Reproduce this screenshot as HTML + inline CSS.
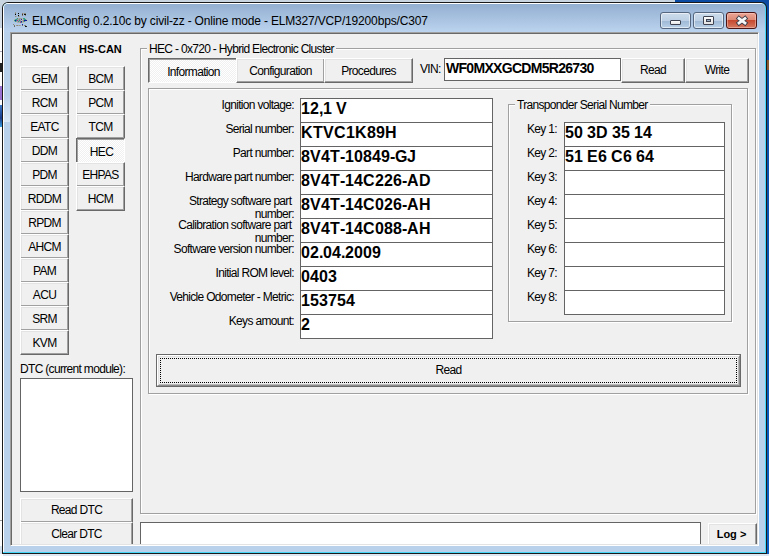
<!DOCTYPE html>
<html><head><meta charset="utf-8">
<style>
*{margin:0;padding:0;box-sizing:border-box}
html,body{width:769px;height:556px;overflow:hidden;background:#dde7f2;position:relative;font-family:"Liberation Sans",sans-serif;font-size:11px;color:#000}
.a{position:absolute}
.t{position:absolute;white-space:pre;line-height:14px;font-size:12px;letter-spacing:-0.68px;margin-top:1px}
.b{font-weight:bold}
/* classic raised button, 25px tall overlapping */
.btn{position:absolute;background:#f0f0f0;border-top:1px solid #fff;border-left:1px solid #fff;border-right:1px solid #696969;border-bottom:1px solid #696969;box-shadow:inset -1px -1px 0 #a0a0a0,inset 1px 1px 0 #e3e3e3;text-align:center;white-space:pre;letter-spacing:-0.25px}
.dn{position:absolute;border-top:1px solid #696969;border-left:1px solid #696969;border-right:1px solid #fff;border-bottom:1px solid #fff;box-shadow:inset 1px 1px 0 #a0a0a0;background-color:#fff;background-image:linear-gradient(45deg,#f0f0f0 25%,transparent 25%,transparent 75%,#f0f0f0 75%),linear-gradient(45deg,#f0f0f0 25%,transparent 25%,transparent 75%,#f0f0f0 75%);background-size:2px 2px;background-position:0 0,1px 1px;text-align:center;white-space:pre;letter-spacing:-0.25px}
.ed{position:absolute;background:#fff;border:1px solid #646464}
.v{position:absolute;font-size:16px;font-weight:bold;white-space:pre;line-height:18px}
.etch{position:absolute;border:1px solid #a0a0a0;box-shadow:1px 1px 0 #fff, inset 1px 1px 0 #fff}
</style></head><body>
<!-- desktop bits -->
<div class="a" style="left:0;top:0;width:769px;height:3px;background:#c9d6e2"></div>
<div class="a" style="left:675px;top:0;width:94px;height:554px;background:linear-gradient(#0a4aa2,#0a5cc4)"></div>
<div class="a" style="left:767px;top:60px;width:2px;height:10px;background:#8a5a30"></div>
<div class="a" style="left:0;top:0;width:3px;height:556px;background:#fdfdfd"></div>
<div class="a" style="left:0;top:0;width:3px;height:28px;background:#c9d6e2"></div>
<div class="a" style="left:0;top:86px;width:3px;height:14px;background:#9a70d0"></div>
<div class="a" style="left:0;top:105px;width:3px;height:22px;background:linear-gradient(#3a78c8,#1a3c8c 60%,#3aa0e0)"></div>
<div class="a" style="left:0;top:520px;width:3px;height:1px;background:#9a9a9a"></div>
<div class="a" style="left:0;top:63px;width:2px;height:9px;background:#222"></div>
<div class="a" style="left:0;top:51px;width:2px;height:1px;background:#aab"></div>
<div class="a" style="left:0;top:546px;width:3px;height:8px;background:#d4e2f0"></div>

<!-- window frame -->
<div class="a" style="left:2px;top:2px;width:765px;height:552px;background:#1a1a1a;border-radius:6px 6px 0 0"></div>
<div class="a" style="left:3px;top:3px;width:763px;height:550px;background:#44d7f8;border-radius:5px 5px 0 0"></div>
<div class="a" style="left:3px;top:3px;width:762px;height:549px;background:#fff;border-radius:5px 5px 0 0"></div>
<div class="a" style="left:4px;top:4px;width:761px;height:548px;background:#b9d1ea;border-radius:4px 4px 0 0"></div>
<div class="a" style="left:4px;top:4px;width:761px;height:28px;background:linear-gradient(#93afd1,#bbd3ee);border-radius:4px 4px 0 0"></div>

<div class="a" style="left:4px;top:95px;width:6px;height:27px;background:linear-gradient(#b9d1ea,#dae8f6)"></div>
<!-- title -->
<div class="a" style="left:12px;top:12px;width:16px;height:16px">
<svg width="16" height="16" viewBox="0 0 16 16" shape-rendering="crispEdges"><rect x="3" y="0" width="1" height="1" fill="#9a9a8a"/><rect x="3" y="1" width="1" height="1" fill="#7a7a6a"/><rect x="3" y="2" width="1" height="1" fill="#000"/><rect x="3" y="4" width="1" height="1" fill="#8a8a7a"/><rect x="4" y="4" width="1" height="1" fill="#aaa"/><rect x="6" y="1" width="1" height="1" fill="#000"/><rect x="6" y="3" width="1" height="1" fill="#000"/><rect x="6" y="4" width="1" height="1" fill="#8a8a7a"/><rect x="7" y="4" width="1" height="1" fill="#aaa"/><rect x="10" y="1" width="1" height="1" fill="#8a7a6a"/><rect x="10" y="2" width="1" height="1" fill="#333"/><rect x="10" y="3" width="1" height="1" fill="#8a7a6a"/><rect x="11" y="1" width="1" height="1" fill="#aaa"/><rect x="12" y="1" width="1" height="1" fill="#8a8a7a"/><rect x="12" y="2" width="1" height="1" fill="#111"/><rect x="13" y="1" width="1" height="1" fill="#8a8a7a"/><rect x="13" y="2" width="1" height="1" fill="#111"/><rect x="13" y="3" width="1" height="1" fill="#8a8a7a"/><rect x="4" y="6" width="1" height="1" fill="#a9b0a6"/><rect x="5" y="6" width="1" height="1" fill="#2a9a90"/><rect x="6" y="6" width="1" height="1" fill="#b0b0a0"/><rect x="7" y="6" width="1" height="1" fill="#9a9a9a"/><rect x="8" y="6" width="1" height="1" fill="#9a9a9a"/><rect x="9" y="6" width="1" height="1" fill="#a0a090"/><rect x="10" y="6" width="1" height="1" fill="#b8b8a8"/><rect x="11" y="6" width="1" height="1" fill="#2aa090"/><rect x="12" y="6" width="1" height="1" fill="#2aa090"/><rect x="13" y="6" width="1" height="1" fill="#c0c0b0"/><rect x="2" y="7" width="1" height="1" fill="#b0b8b0"/><rect x="3" y="7" width="1" height="1" fill="#40a8a0"/><rect x="4" y="7" width="1" height="1" fill="#2a9a90"/><rect x="5" y="7" width="1" height="1" fill="#909a90"/><rect x="6" y="7" width="1" height="1" fill="#a0a0a0"/><rect x="7" y="7" width="1" height="1" fill="#888"/><rect x="8" y="7" width="1" height="1" fill="#b0b0b0"/><rect x="9" y="7" width="1" height="1" fill="#1a2a9a"/><rect x="10" y="7" width="1" height="1" fill="#c0c0c0"/><rect x="11" y="7" width="1" height="1" fill="#9a9a9a"/><rect x="12" y="7" width="1" height="1" fill="#2aa090"/><rect x="13" y="7" width="1" height="1" fill="#2a9a90"/><rect x="14" y="7" width="1" height="1" fill="#b0b8b0"/><rect x="1" y="8" width="1" height="1" fill="#c0c8c0"/><rect x="2" y="8" width="1" height="1" fill="#2a9a90"/><rect x="3" y="8" width="1" height="1" fill="#10209a"/><rect x="4" y="8" width="1" height="1" fill="#2aa090"/><rect x="5" y="8" width="1" height="1" fill="#c02090"/><rect x="6" y="8" width="1" height="1" fill="#a0a0a0"/><rect x="7" y="8" width="1" height="1" fill="#2a9a90"/><rect x="8" y="8" width="1" height="1" fill="#9a9a9a"/><rect x="9" y="8" width="1" height="1" fill="#c0c0c0"/><rect x="10" y="8" width="1" height="1" fill="#aaa"/><rect x="11" y="8" width="1" height="1" fill="#888"/><rect x="12" y="8" width="1" height="1" fill="#10209a"/><rect x="13" y="8" width="1" height="1" fill="#10209a"/><rect x="14" y="8" width="1" height="1" fill="#10209a"/><rect x="15" y="8" width="1" height="1" fill="#c0c0b0"/><rect x="2" y="9" width="1" height="1" fill="#b0b8b0"/><rect x="3" y="9" width="1" height="1" fill="#2a9a90"/><rect x="4" y="9" width="1" height="1" fill="#909a90"/><rect x="5" y="9" width="1" height="1" fill="#aaa"/><rect x="6" y="9" width="1" height="1" fill="#2a9a90"/><rect x="7" y="9" width="1" height="1" fill="#9a9a9a"/><rect x="8" y="9" width="1" height="1" fill="#888"/><rect x="9" y="9" width="1" height="1" fill="#10209a"/><rect x="10" y="9" width="1" height="1" fill="#aaa"/><rect x="11" y="9" width="1" height="1" fill="#888"/><rect x="12" y="9" width="1" height="1" fill="#2a9a90"/><rect x="13" y="9" width="1" height="1" fill="#b0b0b0"/><rect x="5" y="10" width="1" height="1" fill="#b0b0b0"/><rect x="6" y="10" width="1" height="1" fill="#aaa"/><rect x="7" y="10" width="1" height="1" fill="#b0b0b0"/><rect x="8" y="10" width="1" height="1" fill="#c02090"/><rect x="9" y="10" width="1" height="1" fill="#2a9a90"/><rect x="10" y="10" width="1" height="1" fill="#aaa"/><rect x="11" y="10" width="1" height="1" fill="#b8b8b0"/><rect x="1" y="12" width="1" height="1" fill="#8a8a7a"/><rect x="2" y="13" width="1" height="1" fill="#7a7a6a"/><rect x="2" y="14" width="1" height="1" fill="#666"/><rect x="4" y="13" width="1" height="1" fill="#9a9a8a"/><rect x="5" y="13" width="1" height="1" fill="#8a8a7a"/><rect x="6" y="13" width="1" height="1" fill="#aaa"/><rect x="7" y="13" width="1" height="1" fill="#9a9a8a"/><rect x="8" y="13" width="1" height="1" fill="#aaa"/><rect x="10" y="12" width="1" height="1" fill="#10209a"/><rect x="10" y="13" width="1" height="1" fill="#7a7a6a"/><rect x="12" y="13" width="1" height="1" fill="#8a8a7a"/><rect x="13" y="13" width="1" height="1" fill="#7a7a6a"/><rect x="13" y="14" width="1" height="1" fill="#111"/><rect x="14" y="14" width="1" height="1" fill="#222"/></svg></div>
<div class="t" style="left:32px;top:13px;font-size:12px;line-height:15px;letter-spacing:-0.17px;color:#000">ELMConfig 0.2.10c by civil-zz - Online mode - ELM327/VCP/19200bps/C307</div>

<!-- caption buttons -->
<div class="a" style="left:660px;top:12px;width:31px;height:17px;border:1px solid #55667e;border-radius:3px;box-shadow:inset 0 0 0 1px rgba(255,255,255,0.55);background:linear-gradient(#cddcec 0%,#bccfe4 52%,#9fb9d5 53%,#b9d0e8 100%)"></div>
<div class="a" style="left:670px;top:20px;width:11px;height:5px;background:linear-gradient(#fdfdfd,#e6e6e6);border:1px solid #3e4250;border-radius:1px"></div>
<div class="a" style="left:693px;top:12px;width:31px;height:17px;border:1px solid #55667e;border-radius:3px;box-shadow:inset 0 0 0 1px rgba(255,255,255,0.55);background:linear-gradient(#cddcec 0%,#bccfe4 52%,#9fb9d5 53%,#b9d0e8 100%)"></div>
<div class="a" style="left:703px;top:16px;width:11px;height:9px;background:linear-gradient(#fdfdfd,#e2e2e2);border:1px solid #3e4250;border-radius:1px"></div>
<div class="a" style="left:706px;top:19px;width:5px;height:3px;background:#9ab0c8;border:1px solid #3e4250"></div>
<div class="a" style="left:726px;top:12px;width:31px;height:17px;border:1px solid #4a1414;border-radius:3px;box-shadow:inset 0 0 0 1px rgba(255,220,210,0.45);background:linear-gradient(#eda595 0%,#dd8a76 45%,#c5462c 46%,#d57a62 100%)"></div>
<svg class="a" style="left:734px;top:13px" width="16" height="14" viewBox="0 0 16 14"><path d="M3.2 4 L12.8 11.5 M12.8 4 L3.2 11.5" stroke="#3c3c48" stroke-width="4.6" stroke-linecap="butt"/><path d="M3.9 4.6 L12.1 10.9 M12.1 4.6 L3.9 10.9" stroke="#f6f6f6" stroke-width="2.8" stroke-linecap="butt"/></svg>

<!-- client area -->
<div class="a" style="left:10px;top:32px;width:749px;height:514px;background:#f0f0f0;border-left:1px solid #a0a0a0;border-top:1px solid #a0a0a0;border-right:1px solid #fff;border-bottom:1px solid #fff;box-shadow:inset 1px 1px 0 #696969,inset -1px -1px 0 #e3e3e3"></div>

<div class="t b" style="left:22px;top:41px;font-size:11px;letter-spacing:0">MS-CAN</div>
<div class="t b" style="left:79px;top:41px;font-size:11px;letter-spacing:0">HS-CAN</div>

<div class="a" style="left:12px;top:34px;width:745px;height:510px;overflow:hidden"><div class="a" style="left:-12px;top:-34px;width:769px;height:556px">
<div class="btn" style="left:20px;top:66px;width:49px;height:25px;"></div>
<div class="t" style="left:20px;top:66px;width:49px;height:25px;line-height:25px;text-align:center;">GEM</div>
<div class="btn" style="left:20px;top:90px;width:49px;height:25px;"></div>
<div class="t" style="left:20px;top:90px;width:49px;height:25px;line-height:25px;text-align:center;">RCM</div>
<div class="btn" style="left:20px;top:114px;width:49px;height:25px;"></div>
<div class="t" style="left:20px;top:114px;width:49px;height:25px;line-height:25px;text-align:center;">EATC</div>
<div class="btn" style="left:20px;top:138px;width:49px;height:25px;"></div>
<div class="t" style="left:20px;top:138px;width:49px;height:25px;line-height:25px;text-align:center;">DDM</div>
<div class="btn" style="left:20px;top:162px;width:49px;height:25px;"></div>
<div class="t" style="left:20px;top:162px;width:49px;height:25px;line-height:25px;text-align:center;">PDM</div>
<div class="btn" style="left:20px;top:186px;width:49px;height:25px;"></div>
<div class="t" style="left:20px;top:186px;width:49px;height:25px;line-height:25px;text-align:center;">RDDM</div>
<div class="btn" style="left:20px;top:210px;width:49px;height:25px;"></div>
<div class="t" style="left:20px;top:210px;width:49px;height:25px;line-height:25px;text-align:center;">RPDM</div>
<div class="btn" style="left:20px;top:234px;width:49px;height:25px;"></div>
<div class="t" style="left:20px;top:234px;width:49px;height:25px;line-height:25px;text-align:center;">AHCM</div>
<div class="btn" style="left:20px;top:258px;width:49px;height:25px;"></div>
<div class="t" style="left:20px;top:258px;width:49px;height:25px;line-height:25px;text-align:center;">PAM</div>
<div class="btn" style="left:20px;top:282px;width:49px;height:25px;"></div>
<div class="t" style="left:20px;top:282px;width:49px;height:25px;line-height:25px;text-align:center;">ACU</div>
<div class="btn" style="left:20px;top:306px;width:49px;height:25px;"></div>
<div class="t" style="left:20px;top:306px;width:49px;height:25px;line-height:25px;text-align:center;">SRM</div>
<div class="btn" style="left:20px;top:330px;width:49px;height:25px;"></div>
<div class="t" style="left:20px;top:330px;width:49px;height:25px;line-height:25px;text-align:center;">KVM</div>
<div class="btn" style="left:76px;top:66px;width:49px;height:25px;"></div>
<div class="t" style="left:76px;top:66px;width:49px;height:25px;line-height:25px;text-align:center;">BCM</div>
<div class="btn" style="left:76px;top:90px;width:49px;height:25px;"></div>
<div class="t" style="left:76px;top:90px;width:49px;height:25px;line-height:25px;text-align:center;">PCM</div>
<div class="btn" style="left:76px;top:114px;width:49px;height:25px;"></div>
<div class="t" style="left:76px;top:114px;width:49px;height:25px;line-height:25px;text-align:center;">TCM</div>
<div class="dn" style="left:76px;top:138px;width:49px;height:25px;"></div>
<div class="t" style="left:77px;top:139px;width:49px;height:25px;line-height:25px;text-align:center;">HEC</div>
<div class="btn" style="left:76px;top:162px;width:49px;height:25px;"></div>
<div class="t" style="left:76px;top:162px;width:49px;height:25px;line-height:25px;text-align:center;">EHPAS</div>
<div class="btn" style="left:76px;top:186px;width:49px;height:25px;"></div>
<div class="t" style="left:76px;top:186px;width:49px;height:25px;line-height:25px;text-align:center;">HCM</div>
<div class="t" style="left:20px;top:361px">DTC (current module):</div>
<div class="ed" style="left:20px;top:378px;width:113px;height:114px"></div>
<div class="btn" style="left:20px;top:498px;width:113px;height:25px;"></div>
<div class="t" style="left:20px;top:498px;width:113px;height:25px;line-height:25px;text-align:center;margin-top:0;">Read DTC</div>
<div class="btn" style="left:20px;top:522px;width:113px;height:25px;"></div>
<div class="t" style="left:20px;top:522px;width:113px;height:25px;line-height:25px;text-align:center;margin-top:0;">Clear DTC</div>
<div class="etch" style="left:140px;top:48px;width:616px;height:466px"></div>
<div class="t" style="left:147px;top:41px;padding:0 2px 0 2px;background:#f0f0f0">HEC - 0x720 - Hybrid Electronic Cluster</div>
<div class="dn" style="left:148px;top:58px;width:89px;height:25px;"></div>
<div class="t" style="left:149px;top:59px;width:89px;height:25px;line-height:25px;text-align:center;">Information</div>
<div class="btn" style="left:236px;top:58px;width:89px;height:25px;"></div>
<div class="t" style="left:236px;top:58px;width:89px;height:25px;line-height:25px;text-align:center;">Configuration</div>
<div class="btn" style="left:324px;top:58px;width:89px;height:25px;"></div>
<div class="t" style="left:324px;top:58px;width:89px;height:25px;line-height:25px;text-align:center;">Procedures</div>
<div class="t" style="left:420px;top:61px">VIN:</div>
<div class="ed" style="left:444px;top:58px;width:177px;height:23px"></div>
<div class="v" style="left:446px;top:60px;font-size:14px;line-height:16px;letter-spacing:-0.7px">WF0MXXGCDM5R26730</div>
<div class="btn" style="left:621px;top:58px;width:64px;height:25px;"></div>
<div class="t" style="left:621px;top:58px;width:64px;height:25px;line-height:25px;text-align:center;margin-top:0;">Read</div>
<div class="btn" style="left:685px;top:58px;width:64px;height:25px;"></div>
<div class="t" style="left:685px;top:58px;width:64px;height:25px;line-height:25px;text-align:center;margin-top:0;">Write</div>
<div class="etch" style="left:148px;top:88px;width:600px;height:306px"></div>
<div class="t" style="left:150px;width:144px;text-align:right;top:97px">Ignition voltage:</div>
<div class="t" style="left:150px;width:144px;text-align:right;top:121px">Serial number:</div>
<div class="t" style="left:150px;width:144px;text-align:right;top:145px">Part number:</div>
<div class="t" style="left:150px;width:144px;text-align:right;top:169px">Hardware part number:</div>
<div class="t" style="left:150px;width:144px;text-align:right;top:194px;line-height:13px">Strategy software part <br>number:</div>
<div class="t" style="left:150px;width:144px;text-align:right;top:218px;line-height:13px">Calibration software part <br>number:</div>
<div class="t" style="left:150px;width:144px;text-align:right;top:241px">Software version number:</div>
<div class="t" style="left:150px;width:144px;text-align:right;top:265px">Initial ROM level:</div>
<div class="t" style="left:150px;width:144px;text-align:right;top:289px">Vehicle Odometer - Metric:</div>
<div class="t" style="left:150px;width:144px;text-align:right;top:313px">Keys amount:</div>
<div class="ed" style="left:300px;top:98px;width:193px;height:25px"></div>
<div class="ed" style="left:300px;top:122px;width:193px;height:25px"></div>
<div class="ed" style="left:300px;top:146px;width:193px;height:25px"></div>
<div class="ed" style="left:300px;top:170px;width:193px;height:25px"></div>
<div class="ed" style="left:300px;top:194px;width:193px;height:25px"></div>
<div class="ed" style="left:300px;top:218px;width:193px;height:25px"></div>
<div class="ed" style="left:300px;top:242px;width:193px;height:25px"></div>
<div class="ed" style="left:300px;top:266px;width:193px;height:25px"></div>
<div class="ed" style="left:300px;top:290px;width:193px;height:25px"></div>
<div class="ed" style="left:300px;top:314px;width:193px;height:25px"></div>
<div class="v" style="left:301px;top:100px"><span style="display:inline-block;width:9px">1</span><span style="display:inline-block;width:9px">2</span><span style="display:inline-block;width:4px">,</span><span style="display:inline-block;width:9px">1</span><span style="display:inline-block;width:4px">&nbsp;</span><span style="display:inline-block;width:11px">V</span></div>
<div class="v" style="left:301px;top:124px"><span style="display:inline-block;width:12px">K</span><span style="display:inline-block;width:10px">T</span><span style="display:inline-block;width:11px">V</span><span style="display:inline-block;width:12px">C</span><span style="display:inline-block;width:9px">1</span><span style="display:inline-block;width:12px">K</span><span style="display:inline-block;width:9px">8</span><span style="display:inline-block;width:9px">9</span><span style="display:inline-block;width:12px">H</span></div>
<div class="v" style="left:301px;top:148px"><span style="display:inline-block;width:9px">8</span><span style="display:inline-block;width:11px">V</span><span style="display:inline-block;width:9px">4</span><span style="display:inline-block;width:10px">T</span><span style="display:inline-block;width:5px">-</span><span style="display:inline-block;width:9px">1</span><span style="display:inline-block;width:9px">0</span><span style="display:inline-block;width:9px">8</span><span style="display:inline-block;width:9px">4</span><span style="display:inline-block;width:9px">9</span><span style="display:inline-block;width:5px">-</span><span style="display:inline-block;width:12px">G</span><span style="display:inline-block;width:9px">J</span></div>
<div class="v" style="left:301px;top:172px"><span style="display:inline-block;width:9px">8</span><span style="display:inline-block;width:11px">V</span><span style="display:inline-block;width:9px">4</span><span style="display:inline-block;width:10px">T</span><span style="display:inline-block;width:5px">-</span><span style="display:inline-block;width:9px">1</span><span style="display:inline-block;width:9px">4</span><span style="display:inline-block;width:12px">C</span><span style="display:inline-block;width:9px">2</span><span style="display:inline-block;width:9px">2</span><span style="display:inline-block;width:9px">6</span><span style="display:inline-block;width:5px">-</span><span style="display:inline-block;width:12px">A</span><span style="display:inline-block;width:12px">D</span></div>
<div class="v" style="left:301px;top:196px"><span style="display:inline-block;width:9px">8</span><span style="display:inline-block;width:11px">V</span><span style="display:inline-block;width:9px">4</span><span style="display:inline-block;width:10px">T</span><span style="display:inline-block;width:5px">-</span><span style="display:inline-block;width:9px">1</span><span style="display:inline-block;width:9px">4</span><span style="display:inline-block;width:12px">C</span><span style="display:inline-block;width:9px">0</span><span style="display:inline-block;width:9px">2</span><span style="display:inline-block;width:9px">6</span><span style="display:inline-block;width:5px">-</span><span style="display:inline-block;width:12px">A</span><span style="display:inline-block;width:12px">H</span></div>
<div class="v" style="left:301px;top:220px"><span style="display:inline-block;width:9px">8</span><span style="display:inline-block;width:11px">V</span><span style="display:inline-block;width:9px">4</span><span style="display:inline-block;width:10px">T</span><span style="display:inline-block;width:5px">-</span><span style="display:inline-block;width:9px">1</span><span style="display:inline-block;width:9px">4</span><span style="display:inline-block;width:12px">C</span><span style="display:inline-block;width:9px">0</span><span style="display:inline-block;width:9px">8</span><span style="display:inline-block;width:9px">8</span><span style="display:inline-block;width:5px">-</span><span style="display:inline-block;width:12px">A</span><span style="display:inline-block;width:12px">H</span></div>
<div class="v" style="left:301px;top:244px"><span style="display:inline-block;width:9px">0</span><span style="display:inline-block;width:9px">2</span><span style="display:inline-block;width:4px">.</span><span style="display:inline-block;width:9px">0</span><span style="display:inline-block;width:9px">4</span><span style="display:inline-block;width:4px">.</span><span style="display:inline-block;width:9px">2</span><span style="display:inline-block;width:9px">0</span><span style="display:inline-block;width:9px">0</span><span style="display:inline-block;width:9px">9</span></div>
<div class="v" style="left:301px;top:268px"><span style="display:inline-block;width:9px">0</span><span style="display:inline-block;width:9px">4</span><span style="display:inline-block;width:9px">0</span><span style="display:inline-block;width:9px">3</span></div>
<div class="v" style="left:301px;top:292px"><span style="display:inline-block;width:9px">1</span><span style="display:inline-block;width:9px">5</span><span style="display:inline-block;width:9px">3</span><span style="display:inline-block;width:9px">7</span><span style="display:inline-block;width:9px">5</span><span style="display:inline-block;width:9px">4</span></div>
<div class="v" style="left:301px;top:316px"><span style="display:inline-block;width:9px">2</span></div>
<div class="etch" style="left:508px;top:104px;width:224px;height:218px"></div>
<div class="t" style="left:515px;top:97px;padding:0 2px;background:#f0f0f0">Transponder Serial Number</div>
<div class="t" style="left:527px;top:121px">Key 1:</div>
<div class="ed" style="left:564px;top:122px;width:161px;height:25px"></div>
<div class="t" style="left:527px;top:145px">Key 2:</div>
<div class="ed" style="left:564px;top:146px;width:161px;height:25px"></div>
<div class="t" style="left:527px;top:169px">Key 3:</div>
<div class="ed" style="left:564px;top:170px;width:161px;height:25px"></div>
<div class="t" style="left:527px;top:193px">Key 4:</div>
<div class="ed" style="left:564px;top:194px;width:161px;height:25px"></div>
<div class="t" style="left:527px;top:217px">Key 5:</div>
<div class="ed" style="left:564px;top:218px;width:161px;height:25px"></div>
<div class="t" style="left:527px;top:241px">Key 6:</div>
<div class="ed" style="left:564px;top:242px;width:161px;height:25px"></div>
<div class="t" style="left:527px;top:265px">Key 7:</div>
<div class="ed" style="left:564px;top:266px;width:161px;height:25px"></div>
<div class="t" style="left:527px;top:289px">Key 8:</div>
<div class="ed" style="left:564px;top:290px;width:161px;height:25px"></div>
<div class="v" style="left:565px;top:124px"><span style="display:inline-block;width:9px">5</span><span style="display:inline-block;width:9px">0</span><span style="display:inline-block;width:4px">&nbsp;</span><span style="display:inline-block;width:9px">3</span><span style="display:inline-block;width:12px">D</span><span style="display:inline-block;width:4px">&nbsp;</span><span style="display:inline-block;width:9px">3</span><span style="display:inline-block;width:9px">5</span><span style="display:inline-block;width:4px">&nbsp;</span><span style="display:inline-block;width:9px">1</span><span style="display:inline-block;width:9px">4</span></div>
<div class="v" style="left:565px;top:148px"><span style="display:inline-block;width:9px">5</span><span style="display:inline-block;width:9px">1</span><span style="display:inline-block;width:4px">&nbsp;</span><span style="display:inline-block;width:11px">E</span><span style="display:inline-block;width:9px">6</span><span style="display:inline-block;width:4px">&nbsp;</span><span style="display:inline-block;width:12px">C</span><span style="display:inline-block;width:9px">6</span><span style="display:inline-block;width:4px">&nbsp;</span><span style="display:inline-block;width:9px">6</span><span style="display:inline-block;width:9px">4</span></div>
<div class="a" style="left:156px;top:354px;width:585px;height:33px;border:1px solid #696969;background:#f0f0f0"></div>
<div class="a" style="left:157px;top:355px;width:583px;height:31px;border-top:1px solid #fff;border-left:1px solid #fff;border-right:1px solid #8c8c8c;border-bottom:1px solid #8c8c8c;box-shadow:inset 1px 1px 0 #e3e3e3,inset -1px -1px 0 #b8b8b8"></div>
<div class="t" style="left:157px;top:355px;width:583px;height:31px;line-height:31px;text-align:center;margin-top:0">Read</div>
<div class="a" style="left:160px;top:358px;width:577px;height:25px;border:1px dotted #000"></div>
<div class="ed" style="left:140px;top:522px;width:561px;height:30px"></div>
<div class="btn" style="left:708px;top:523px;width:49px;height:25px;"></div>
<div class="t" style="left:708px;top:523px;width:49px;height:25px;line-height:25px;text-align:center;margin-top:0;font-weight:bold;letter-spacing:0;font-size:11px;margin-top:-1px;padding-right:2px">Log &gt;</div>
</div></div>
</body></html>
